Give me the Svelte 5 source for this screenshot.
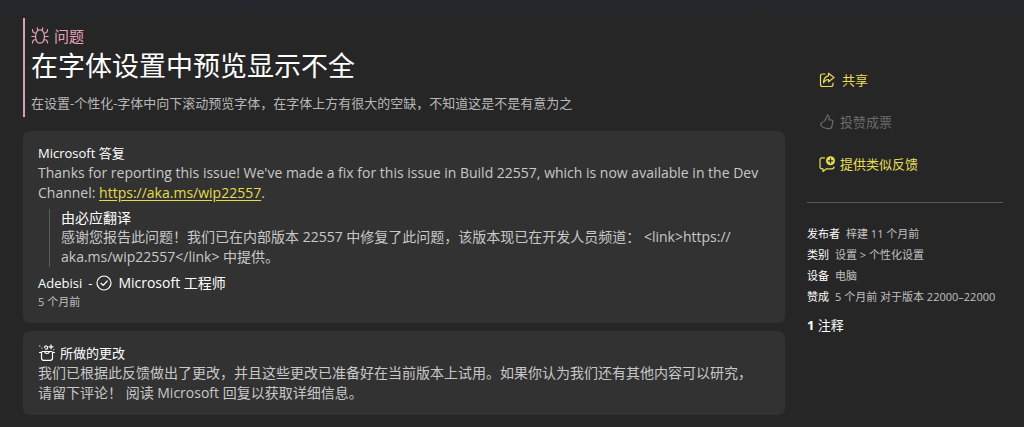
<script lang="ts">
    const details = [
        { label: "发布者", value: "梓建 11 个月前" },
        { label: "类别", value: "设置 > 个性化设置" },
        { label: "设备", value: "电脑" },
        { label: "赞成", value: "5 个月前 对于版本 22000–22000" },
    ];
</script>

<div class="page">
    <main>
        <header class="issue">
            <div class="kind">
                <svg viewBox="0 0 18 18" width="18" height="18">
                    <path
                        d="M5.800 4.600C6.500 3.300 7.500 2.800 9 2.800s2.500.5 3.200 1.800C13.200 6 13.400 7.500 13.400 9.500c0 4-1.500 6.700-4.400 6.700S4.600 13.500 4.600 9.500C4.600 7.500 4.800 6 5.800 4.600zM6.800 3.600 6.300.8M11.200 3.600l.5-2.800M5 6.300C2.500 6.300 1.500 5 1.500 2.500M13 6.300c2.500 0 3.500-1.300 3.500-3.800M4.600 9.500H.8M13.400 9.500h3.800M5.200 12.500c-2.700 0-3.700 1-3.700 3.500M12.800 12.500c2.700 0 3.700 1 3.700 3.500"
                    />
                </svg>
                <span>问题</span>
            </div>
            <h1>在字体设置中预览显示不全</h1>
            <p>
                在设置-个性化-字体中向下滚动预览字体，在字体上方有很大的空缺，不知道这是不是有意为之
            </p>
        </header>

        <section class="card reply">
            <h2>Microsoft 答复</h2>
            <p class="body" lang="en">
                Thanks for reporting this issue! We've made a fix for this issue
                in Build 22557, which is now available in the Dev Channel:
                <a href="https://aka.ms/wip22557">https://aka.ms/wip22557</a>.
            </p>
            <blockquote>
                <h3>由必应翻译</h3>
                <p>
                    感谢您报告此问题！我们已在内部版本 22557
                    中修复了此问题，该版本现已在开发人员频道： &lt;link>https://<wbr
                    />aka.ms/wip22557&lt;/link> 中提供。
                </p>
            </blockquote>
            <div class="author">
                <span>Adebisi</span>
                <span class="role">
                    -
                    <svg viewBox="0 0 16 16" width="16" height="16">
                        <circle cx="8" cy="8" r="7" />
                        <path d="M5 8.300 7.200 10.400 11.200 6" />
                    </svg>
                </span>
                <span class="team">Microsoft 工程师</span>
            </div>
            <time>5 个月前</time>
        </section>

        <section class="card changes">
            <h2>
                <svg viewBox="0 0 18 18" width="18" height="18">
                    <path
                        d="M1.500 8.500Q4 8.500 4.500 7.500H13.500Q14 8.500 16.500 8.500M3.500 8.500v5.500q0 2.300 2.300 2.300h6.400q2.300 0 2.300-2.300v-5.500M6.500 7.500q.5 2 2.500 2t2.500-2M6.500 3.500q.5-1.800 2-1.500 1.500.5 1 2.200-.5 1.300-2 .8M13 .8v4M11 2.800h4M4 4v.1M1.800 1.800v.1M15.800 5.500v.1"
                    />
                </svg>
                <span>所做的更改</span>
            </h2>
            <p class="body">
                我们已根据此反馈做出了更改，并且这些更改已准备好在当前版本上试用。如果你认为我们还有其他内容可以研究，请留下评论！
                阅读 Microsoft 回复以获取详细信息。
            </p>
        </section>
    </main>

    <aside>
        <div class="actions">
            <button class="share">
                <svg viewBox="0 0 16 16" width="16" height="16">
                    <path
                        d="M6 2H3.500q-2 0-2 2v8.500q0 2 2 2h8.500q2 0 2-2V11M9.500 1.200 15 5.500 9.500 9.800V7.500Q6.500 7.200 4.500 10.800 4.800 4.500 9.500 3.800z"
                    />
                </svg>
                <span>共享</span>
            </button>
            <button disabled>
                <svg viewBox="0 0 16 16" width="16" height="16">
                    <path
                        d="M8.500 1c1.800.2 2 2 1.300 4.800h1.700q2.800 0 2.300 2.600l-.8 3.600q-.7 3-3.500 2.700L6 14Q3.500 13.400 2 11.500 1.300 9 3 8.500 6 7.500 7 4.500z"
                    />
                </svg>
                <span>投赞成票</span>
            </button>
            <button>
                <svg viewBox="0 0 16 16" width="16" height="16">
                    <path
                        d="M5.500 1.800H3q-2 0-2 2v7q0 2 2 2h1v2.700L7.500 12.800H13q2 0 2-2"
                    />
                    <circle class="badge" cx="11.500" cy="4.800" r="4.500" />
                    <path class="plus" d="M11.500 2.600v4.400M9.300 4.800h4.400" />
                </svg>
                <span>提供类似反馈</span>
            </button>
        </div>

        <dl>
            {#each details as item}
                <div>
                    <dt>{item.label}</dt>
                    <dd>{item.value}</dd>
                </div>
            {/each}
        </dl>

        <h2 class="comments"><b>1</b> 注释</h2>
    </aside>
</div>

<style>
    :global(body) {
        margin: 0;
        background: #262626;
    }

    .page {
        box-sizing: border-box;
        min-height: 100vh;
        display: grid;
        grid-template-columns: minmax(0, 1fr) 196px;
        gap: 22px;
        padding: 18px 21px 11px 23px;
        background: linear-gradient(#23272b, #262626 28px);
        color: #fff;
        font-family: "Open Sans", "Noto Sans CJK SC", sans-serif;
        font-size: 14px;
        line-height: 20px;
    }

    h1,
    h2,
    h3,
    p,
    blockquote,
    dl,
    dd {
        margin: 0;
        font-weight: 400;
    }

    svg {
        flex: none;
        fill: none;
        stroke: currentColor;
        stroke-width: 1.2;
        stroke-linecap: round;
        stroke-linejoin: round;
    }

    .issue {
        padding: 8px 0 4px 6px;
        border-left: 2px solid #d8a0b4;
    }

    .kind {
        display: flex;
        align-items: center;
        gap: 5px;
        color: #e3a2ba;
        font-size: 15px;
    }

    h1 {
        font-size: 27px;
        line-height: 40px;
    }

    .issue p {
        margin-top: 7px;
        color: #b8b8b8;
        font-size: 13px;
    }

    .card {
        margin-top: 14px;
        padding: 12px 20px 12px 15px;
        border-radius: 7px;
        background: #323232;
    }

    .card + .card {
        margin-top: 8px;
    }

    .card h2 {
        display: flex;
        align-items: center;
        gap: 4px;
        font-size: 13px;
    }

    .body {
        color: #c8c8c8;
    }

    a {
        color: #e6dc4a;
        text-underline-offset: 2px;
    }

    blockquote {
        margin: 6px 0 6px 11px;
        padding-left: 11px;
        border-left: 1px solid #5c5c5c;
    }

    blockquote p {
        color: #c8c8c8;
    }

    h3 {
        font-size: 14px;
        line-height: 18px;
    }

    .author {
        display: flex;
        align-items: center;
        gap: 6px;
        font-size: 13px;
    }

    .role {
        display: flex;
        align-items: center;
        gap: 4px;
    }

    .team {
        font-size: 14px;
    }

    time {
        display: block;
        color: #c0c0c0;
        font-size: 11px;
        line-height: 18px;
    }

    .actions {
        display: flex;
        flex-direction: column;
        align-items: flex-start;
        gap: 22px;
        padding: 52px 0 28px 12px;
        border-bottom: 1px solid #5a5a5a;
    }

    button {
        display: flex;
        align-items: center;
        gap: 5px;
        padding: 0;
        border: 0;
        background: none;
        color: #e8de56;
        font: inherit;
        font-size: 13px;
    }

    button:disabled {
        color: #6c6c6c;
    }

    .share {
        gap: 7px;
    }

    .badge {
        fill: currentColor;
        stroke: none;
    }

    .plus {
        stroke: #262626;
    }

    dl {
        padding-top: 20px;
        font-size: 11px;
        line-height: 21px;
    }

    dl div {
        display: flex;
        gap: 6px;
        white-space: nowrap;
    }

    dd {
        color: #c0c0c0;
    }

    .comments {
        margin-top: 8px;
        font-size: 13px;
    }
</style>
